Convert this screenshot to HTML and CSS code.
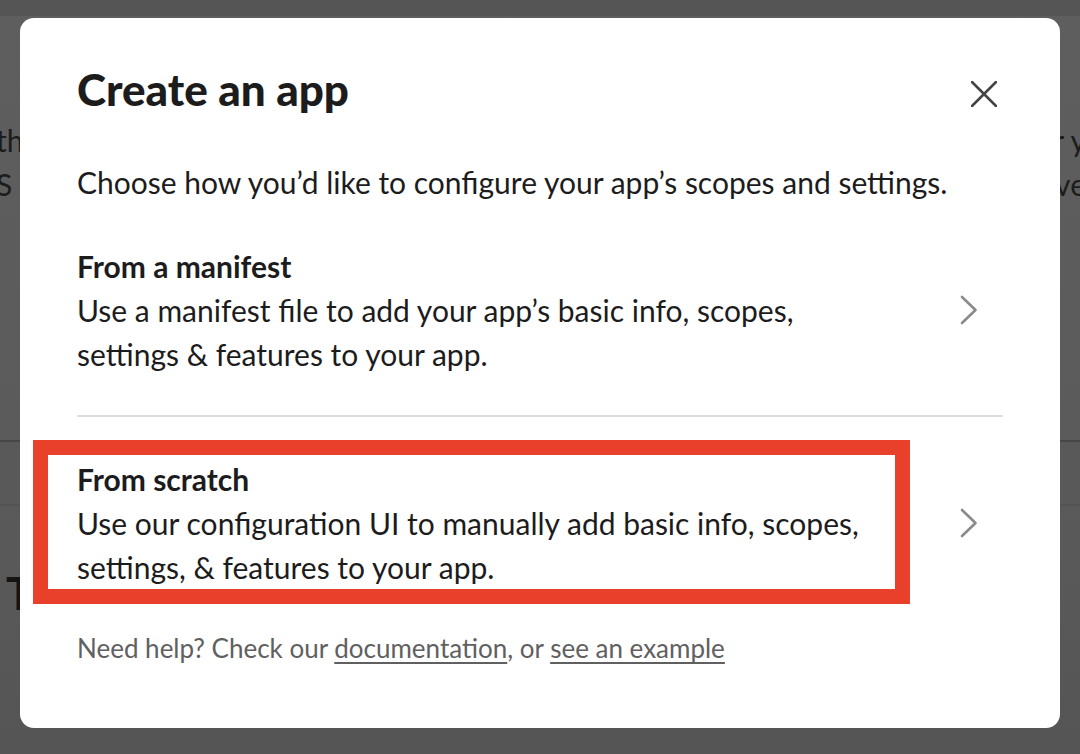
FILE: index.html
```html
<!DOCTYPE html>
<html lang="en">
<head>
<meta charset="utf-8">
<title>Create an app</title>
<link rel="stylesheet" href="styles.css">
</head>
<body>
<div class="page">
  <div class="page-top"></div>
  <div class="bg-row first"><span class="bg-left">th</span><span class="bg-right">r y</span></div>
  <div class="bg-row"><span class="bg-left">S</span><span class="bg-right">ve</span></div>
  <div class="bg-band"></div>
  <div class="bg-heading">T</div>
</div>

<div class="modal" role="dialog" aria-labelledby="modal-title">
  <div class="modal-header">
    <h1 id="modal-title" class="modal-title">Create an app</h1>
    <button class="close-btn" aria-label="Close">
      <svg width="26" height="26" viewBox="0 0 26 26"><path d="M1 1 L25 25 M25 1 L1 25" stroke="#454545" stroke-width="2.6" stroke-linecap="round" fill="none"/></svg>
    </button>
  </div>
  <p class="intro">Choose how you’d like to configure your app’s scopes and settings.</p>

  <div class="option">
    <div class="option-text">
      <div class="option-title">From a manifest</div>
      <div class="option-desc">Use a manifest file to add your app’s basic info, scopes,<br>settings &amp; features to your app.</div>
    </div>
    <svg class="chevron" width="18" height="30" viewBox="0 0 18 30"><path d="M2 2 L15.5 15 L2 28" stroke="#8a8a8a" stroke-width="2.6" stroke-linecap="round" stroke-linejoin="round" fill="none"/></svg>
  </div>

  <div class="divider"></div>

  <div class="option option-marked">
    <div class="highlight"></div>
    <div class="option-text">
      <div class="option-title">From scratch</div>
      <div class="option-desc">Use our configuration UI to manually add basic info, scopes,<br>settings, &amp; features to your app.</div>
    </div>
    <svg class="chevron" width="18" height="30" viewBox="0 0 18 30"><path d="M2 2 L15.5 15 L2 28" stroke="#8a8a8a" stroke-width="2.6" stroke-linecap="round" stroke-linejoin="round" fill="none"/></svg>
  </div>

  <p class="help">Need help? Check our <a href="#">documentation</a>, or <a href="#">see an example</a></p>
</div>
</body>
</html>
```

FILE: styles.css
```css
* { box-sizing: border-box; }

html, body {
  margin: 0;
  padding: 0;
}

body {
  width: 1080px;
  height: 754px;
  overflow: hidden;
  background: #5b5b5b;
  font-family: Lato, "Noto Sans", sans-serif;
  color: #1d1c1d;
  position: relative;
}

/* backdrop page (dimmed) */
.page {
  height: 754px;
  background: linear-gradient(180deg, #5e5e5e 0%, #5b5b5b 60%, #555555 100%);
}

.page-top {
  height: 16px;
  background: #555555;
}

.bg-row {
  display: flex;
  justify-content: space-between;
  font-size: 30px;
  line-height: 44px;
  color: #1c1c1c;
}

.bg-row.first {
  margin-top: 102px;
}

.bg-left {
  margin-left: -4px;
}

.bg-right {
  margin-right: -6px;
}

.bg-band {
  margin-top: 234px;
  height: 66px;
  border-top: 2px solid #474747;
  border-bottom: 2px solid #535353;
  background: #595959;
}

.bg-heading {
  margin-top: 60px;
  margin-left: 6px;
  font-size: 45px;
  font-weight: 700;
  line-height: 54px;
  color: #141414;
}

/* modal */
.modal {
  position: absolute;
  top: 18px;
  left: 20px;
  width: 1040px;
  height: 710px;
  background: #ffffff;
  border-radius: 14px;
  padding: 44px 57px 0 57px;
  display: flex;
  flex-direction: column;
}

.modal-header {
  display: flex;
  justify-content: space-between;
  align-items: center;
}

.modal-title {
  margin: 0;
  font-size: 44px;
  line-height: 54px;
  font-weight: 900;
  color: #1d1c1d;
}

.close-btn {
  border: 0;
  background: none;
  padding: 0;
  margin-right: 6px;
  margin-top: 10px;
  width: 26px;
  height: 26px;
  display: flex;
}

.intro {
  margin: 44px 0 0 0;
  font-size: 30px;
  line-height: 44px;
}

.option {
  position: relative;
  display: flex;
  align-items: center;
  justify-content: space-between;
  margin-top: 40px;
  padding-right: 25px;
}

.option-marked {
  margin-top: 40px;
}

.option-title {
  font-size: 30px;
  line-height: 44px;
  font-weight: 700;
}

.option-desc {
  font-size: 30px;
  line-height: 44px;
}

.chevron {
  flex: none;
}

.divider {
  margin-top: 39px;
  height: 2px;
  background: #dddddd;
}

.highlight {
  position: absolute;
  left: -44px;
  top: -17px;
  width: 877px;
  height: 164px;
  border: 15px solid #e8402a;
  pointer-events: none;
}

.help {
  margin: 37px 0 0 0;
  font-size: 26px;
  line-height: 44px;
  color: #616061;
}

.help a {
  color: #616061;
  text-decoration: underline;
  text-underline-offset: 4px;
}
```
